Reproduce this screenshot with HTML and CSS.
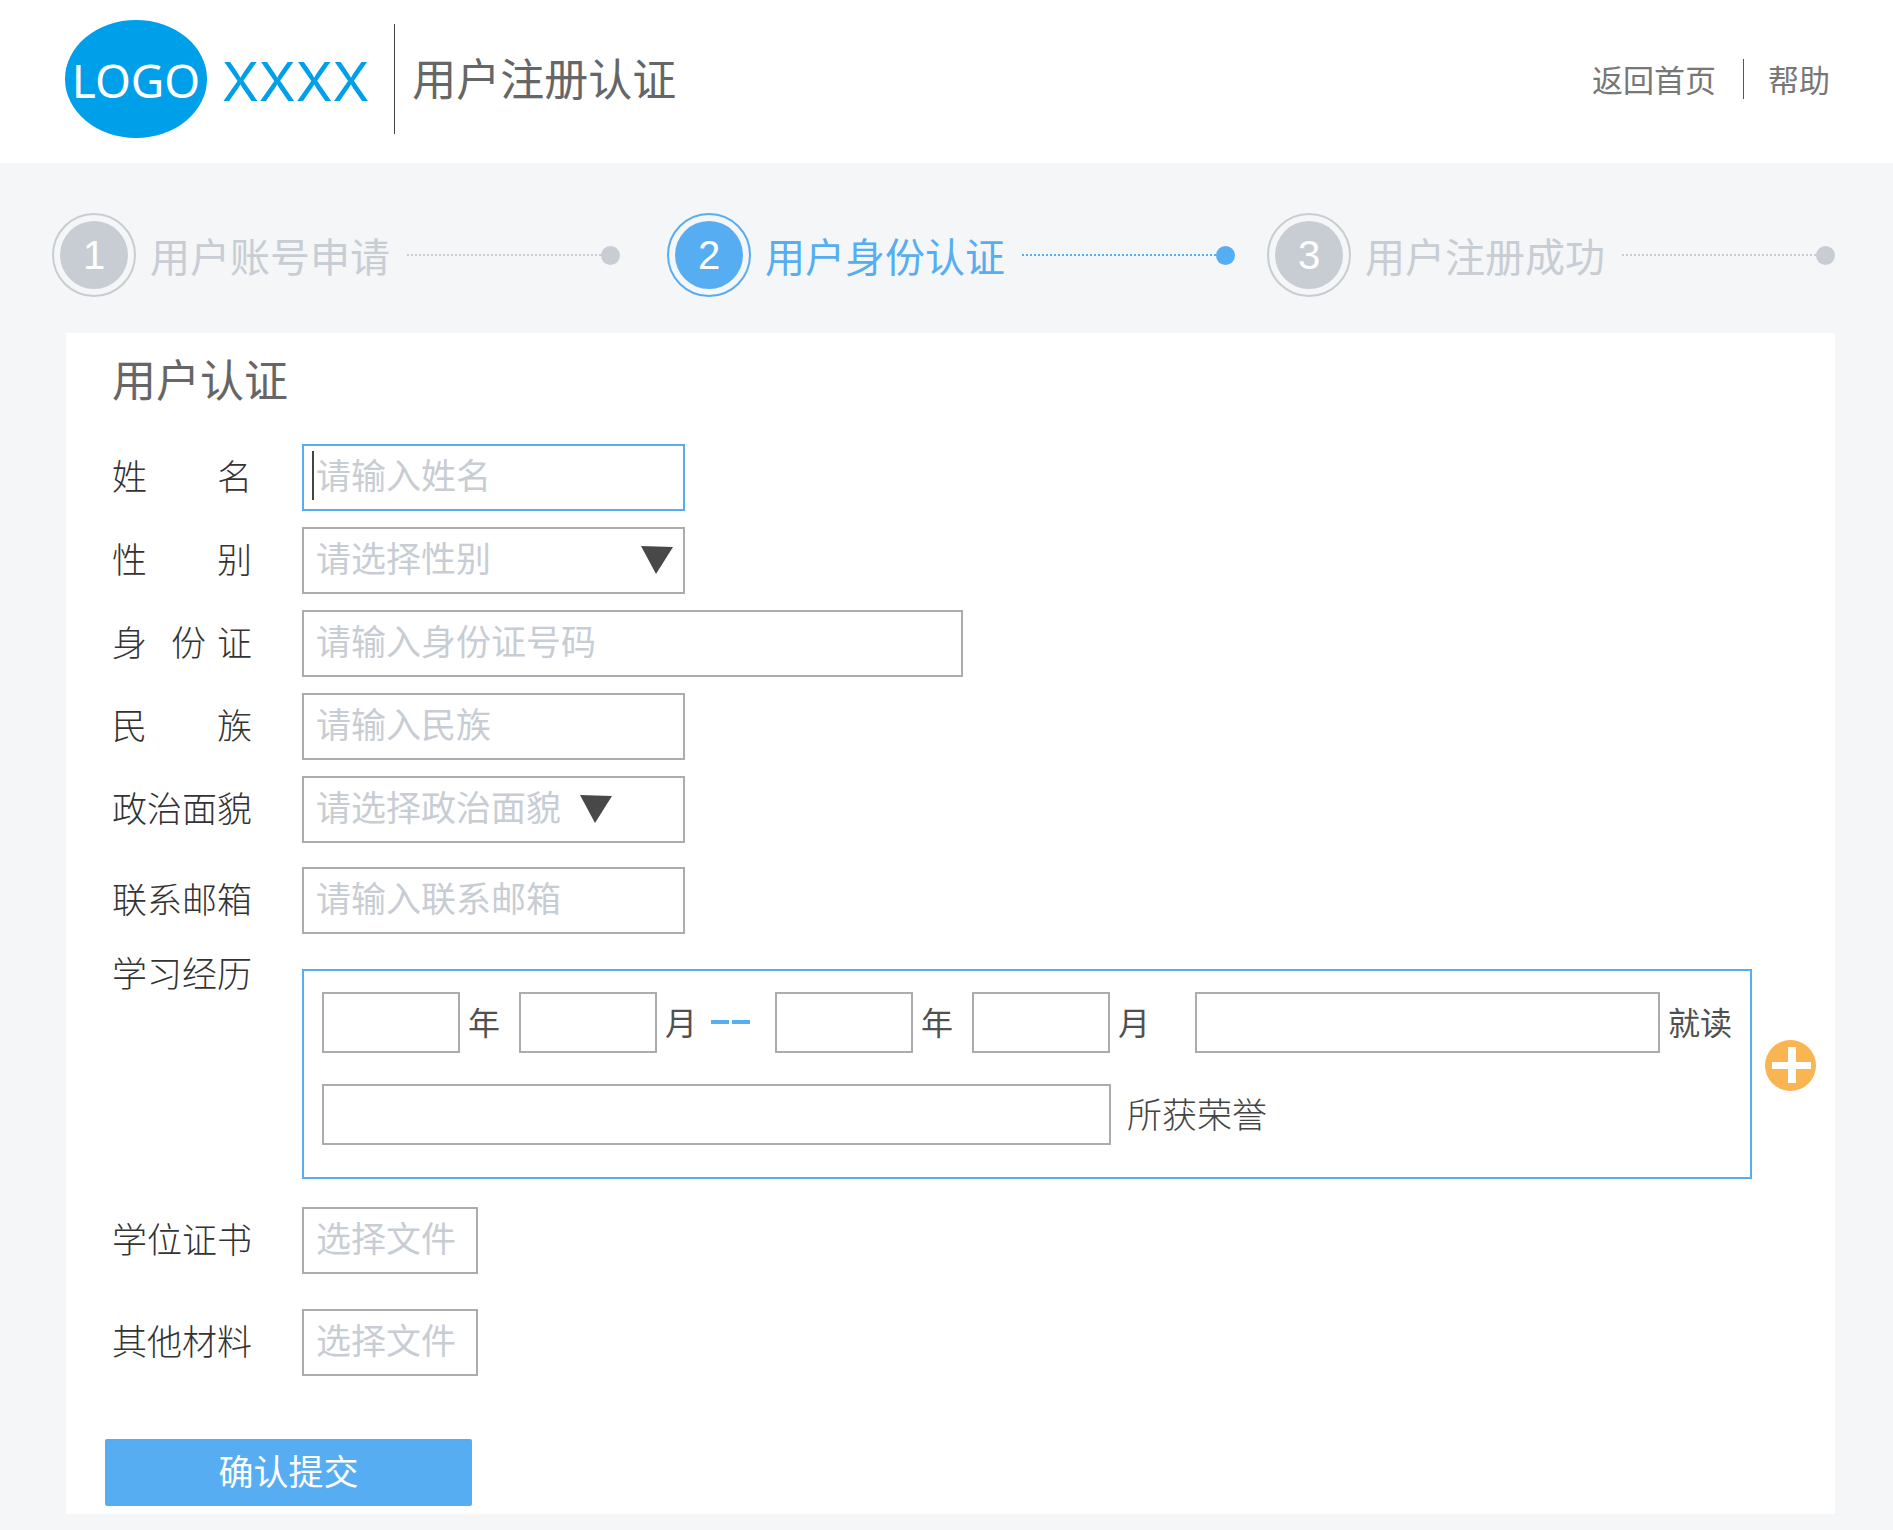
FILE: index.html
```html
<!DOCTYPE html>
<html lang="zh-CN">
<head>
<meta charset="utf-8">
<title>用户注册认证</title>
<link rel="stylesheet" href="styles.css">
</head>
<body>
<header class="header">
  <div class="logo">LOGO</div>
  <span class="brand">XXXX</span>
  <h1 class="site-title">用户注册认证</h1>
  <nav class="nav">
    <a class="nav-link" href="#home">返回首页</a>
    <a class="nav-link" href="#help">帮助</a>
  </nav>
</header>

<ol class="steps">
  <li class="step">
    <span class="step-ring"><span class="step-number">1</span></span>
    <span class="step-name">用户账号申请</span>
    <span class="step-line"></span><span class="step-dot"></span>
  </li>
  <li class="step step-active" aria-current="step">
    <span class="step-ring"><span class="step-number">2</span></span>
    <span class="step-name">用户身份认证</span>
    <span class="step-line"></span><span class="step-dot"></span>
  </li>
  <li class="step">
    <span class="step-ring"><span class="step-number">3</span></span>
    <span class="step-name">用户注册成功</span>
    <span class="step-line"></span><span class="step-dot"></span>
  </li>
</ol>

<main class="card">
  <h2 class="card-title">用户认证</h2>
  <form class="form">
    <div class="row">
      <label class="label" for="name">姓名</label>
      <div class="control">
        <input class="field field-current" id="name" type="text" placeholder="请输入姓名">
        <span class="caret"></span>
      </div>
    </div>
    <div class="row">
      <label class="label" for="gender">性别</label>
      <div class="control">
        <select class="field" id="gender">
          <option value="">请选择性别</option>
          <option>男</option>
          <option>女</option>
        </select>
        <svg class="arrow" viewBox="0 0 32 28" aria-hidden="true"><path d="M0 0L32 1L15 28Z"/></svg>
      </div>
    </div>
    <div class="row">
      <label class="label label-id" for="idcard">身<span class="label-middle">份</span>证</label>
      <div class="control control-wide">
        <input class="field" id="idcard" type="text" placeholder="请输入身份证号码">
      </div>
    </div>
    <div class="row">
      <label class="label" for="nation">民族</label>
      <div class="control">
        <input class="field" id="nation" type="text" placeholder="请输入民族">
      </div>
    </div>
    <div class="row">
      <label class="label" for="politics">政治面貌</label>
      <div class="control">
        <select class="field" id="politics">
          <option value="">请选择政治面貌</option>
          <option>中共党员</option>
          <option>共青团员</option>
          <option>群众</option>
        </select>
        <svg class="arrow arrow-inset" viewBox="0 0 32 28" aria-hidden="true"><path d="M0 0L32 1L15 28Z"/></svg>
      </div>
    </div>
    <div class="row row-email">
      <label class="label" for="email">联系邮箱</label>
      <div class="control">
        <input class="field" id="email" type="email" placeholder="请输入联系邮箱">
      </div>
    </div>
    <div class="row row-study">
      <span class="label" id="study">学习经历</span>
      <div class="study" role="group" aria-labelledby="study">
        <div class="study-line">
          <input class="box box-date" id="from-year" type="text">
          <label class="unit unit-year" for="from-year">年</label>
          <input class="box box-date" id="from-month" type="text">
          <label class="unit" for="from-month">月</label>
          <span class="range"><i class="dash"></i><i class="dash"></i></span>
          <input class="box box-date" id="to-year" type="text">
          <label class="unit unit-year" for="to-year">年</label>
          <input class="box box-date" id="to-month" type="text">
          <label class="unit unit-last" for="to-month">月</label>
          <input class="box box-school" id="school" type="text">
          <label class="unit" for="school">就读</label>
        </div>
        <div class="study-line">
          <input class="box box-honor" id="honor" type="text">
          <label class="honor" for="honor">所获荣誉</label>
        </div>
      </div>
      <button class="add" type="button" aria-label="添加学习经历">
        <svg class="add-icon" viewBox="0 0 51 51" aria-hidden="true"><circle cx="25.5" cy="25.5" r="25.5" fill="#f9b552"/><path d="M7 22H23V7H31V22H46V29H31V43H23V29H7Z" fill="#fff"/></svg>
      </button>
    </div>
    <div class="row row-degree">
      <span class="label" id="degree-label">学位证书</span>
      <input class="file-input" id="degree" type="file" aria-labelledby="degree-label">
      <label class="file" for="degree">选择文件</label>
    </div>
    <div class="row row-other">
      <span class="label" id="other-label">其他材料</span>
      <input class="file-input" id="other" type="file" aria-labelledby="other-label">
      <label class="file" for="other">选择文件</label>
    </div>
    <button class="submit" type="submit">确认提交</button>
  </form>
</main>
</body>
</html>
```
FILE: styles.css
```css
:root {
  --blue: #57adf2;
  --muted: #c8cdd4;
  --line: #acacac;
}

* {
  box-sizing: border-box;
}

body {
  margin: 0;
  background: #f4f6f8;
  color: #333;
  font-family: "Noto Sans CJK SC", sans-serif;
  font-size: 35px;
  line-height: 50px;
}

input,
select,
button {
  font: inherit;
}

/* header */
.header {
  display: flex;
  align-items: center;
  padding: 20px 63px 25px 65px;
  background: #fff;
}

.logo {
  display: flex;
  align-items: center;
  justify-content: center;
  width: 142px;
  height: 118px;
  padding-top: 2px;
  border-radius: 50%;
  background: #009fe9;
  color: #fff;
  font-family: "Noto Sans", sans-serif;
  font-size: 46px;
}

.brand {
  margin: 0 25px 0 15px;
  padding-top: 5px;
  color: #009fe9;
  font-family: Inter, sans-serif;
  font-size: 54px;
  font-weight: 400;
}

.site-title {
  margin: 0;
  padding: 28px 0 32px 17px;
  border-left: 1px solid #444;
  color: #666;
  font-size: 44px;
  font-weight: 400;
}

.nav {
  display: flex;
  align-items: center;
  margin-left: auto;
  font-size: 31px;
  line-height: 40px;
}

.nav-link {
  color: #777;
  text-decoration: none;
}

.nav-link + .nav-link {
  margin-left: 27px;
  padding-left: 24px;
  border-left: 1px solid #555;
}

/* progress */
.steps {
  display: grid;
  grid-template-columns: 583fr 568fr 568fr;
  gap: 32px;
  margin: 0;
  padding: 50px 58px 36px 52px;
  list-style: none;
}

.step {
  display: flex;
  align-items: center;
  color: var(--muted);
}

.step:first-child {
  padding-right: 15px;
}

.step-active {
  color: var(--blue);
}

.step-ring {
  padding: 6px;
  border: 2px solid;
  border-radius: 50%;
}

.step-number {
  display: block;
  width: 68px;
  height: 68px;
  border-radius: 50%;
  background: var(--muted);
  color: #fff;
  font-family: "Liberation Sans", sans-serif;
  font-size: 40px;
  line-height: 68px;
  text-align: center;
}

.step-active .step-number {
  background: var(--blue);
}

.step-name {
  margin: 0 17px 0 14px;
  font-size: 40px;
  white-space: nowrap;
}

.step-line {
  flex: 1;
  border-top: 2px dotted;
}

.step-dot {
  width: 19px;
  height: 19px;
  border-radius: 50%;
  background: currentColor;
}

/* form card */
.card {
  margin: 0 58px 16px 66px;
  padding: 15px 19px 8px 39px;
  background: #fff;
}

.card-title {
  margin: 0 0 36px;
  padding-left: 7px;
  color: #666;
  font-size: 44px;
  font-weight: 400;
  line-height: 60px;
}

.row {
  display: flex;
  align-items: center;
  margin-bottom: 16px;
  padding-left: 7px;
}

.label {
  flex: none;
  width: 140px;
  margin-right: 50px;
  padding-bottom: 6px;
  font-weight: 300;
  text-align: justify;
  text-align-last: justify;
  white-space: nowrap;
}

.label-id {
  text-align-last: left;
}

.label-middle {
  margin: 0 11px 0 24px;
}

.control {
  position: relative;
  width: 383px;
}

.control-wide {
  width: 661px;
}

.field {
  display: block;
  width: 100%;
  height: 67px;
  padding: 0 12px 8px;
  border: 2px solid var(--line);
  border-radius: 0;
  outline: 0;
  appearance: none;
  background: #fff;
  color: #333;
}

select.field {
  color: var(--muted);
}

.field::placeholder {
  color: var(--muted);
  opacity: 1;
}

.field-current {
  border-color: var(--blue);
}

.caret {
  position: absolute;
  top: 7px;
  left: 10px;
  width: 2px;
  height: 49px;
  background: #444;
}

.arrow {
  position: absolute;
  top: 19px;
  right: 12px;
  width: 32px;
  height: 28px;
  fill: #484848;
  pointer-events: none;
}

.arrow-inset {
  right: 73px;
}

.row-email {
  margin: 24px 0 35px;
}

/* study history */
.row-study {
  align-items: flex-start;
  margin-bottom: 28px;
}

.row-study .label {
  line-height: 6px;
}

.study {
  flex: 1;
  padding: 21px 18px 32px;
  border: 2px solid var(--blue);
}

.study-line {
  display: flex;
  align-items: center;
}

.study-line + .study-line {
  margin-top: 31px;
}

.box {
  height: 61px;
  padding: 0 12px;
  border: 2px solid var(--line);
  border-radius: 0;
  background: #fff;
}

.box-date {
  width: 138px;
}

.box-school {
  flex: 1;
  min-width: 0;
}

.box-honor {
  width: 789px;
}

.unit {
  margin-left: 8px;
  padding-bottom: 4px;
  color: #505050;
  font-size: 32px;
  white-space: nowrap;
}

.unit-year {
  margin-right: 19px;
}

.unit-last {
  margin-right: 45px;
}

.range {
  display: flex;
  gap: 3px;
  margin: 0 25px 0 14px;
  padding-bottom: 2px;
}

.dash {
  width: 18px;
  height: 4px;
  background: var(--blue);
}

.honor {
  margin-left: 16px;
  padding-bottom: 4px;
  color: #444;
  font-weight: 300;
}

.add {
  width: 51px;
  height: 51px;
  margin: 71px 0 0 13px;
  padding: 0;
  border: 0;
  border-radius: 50%;
  background: none;
}

.add-icon {
  display: block;
}

/* uploads */
.row-degree {
  margin-bottom: 35px;
}

.row-other {
  margin-bottom: 63px;
}

.file {
  width: 176px;
  height: 67px;
  padding: 3px 16px 0 12px;
  border: 2px solid var(--line);
  color: var(--muted);
}

.file-input {
  position: absolute;
  width: 1px;
  height: 1px;
  opacity: 0;
}

.file-input:focus + .file {
  border-color: var(--blue);
}

.submit {
  display: block;
  width: 367px;
  height: 67px;
  padding: 0 0 6px;
  border: 0;
  border-radius: 2px;
  background: var(--blue);
  color: #fff;
}
```
